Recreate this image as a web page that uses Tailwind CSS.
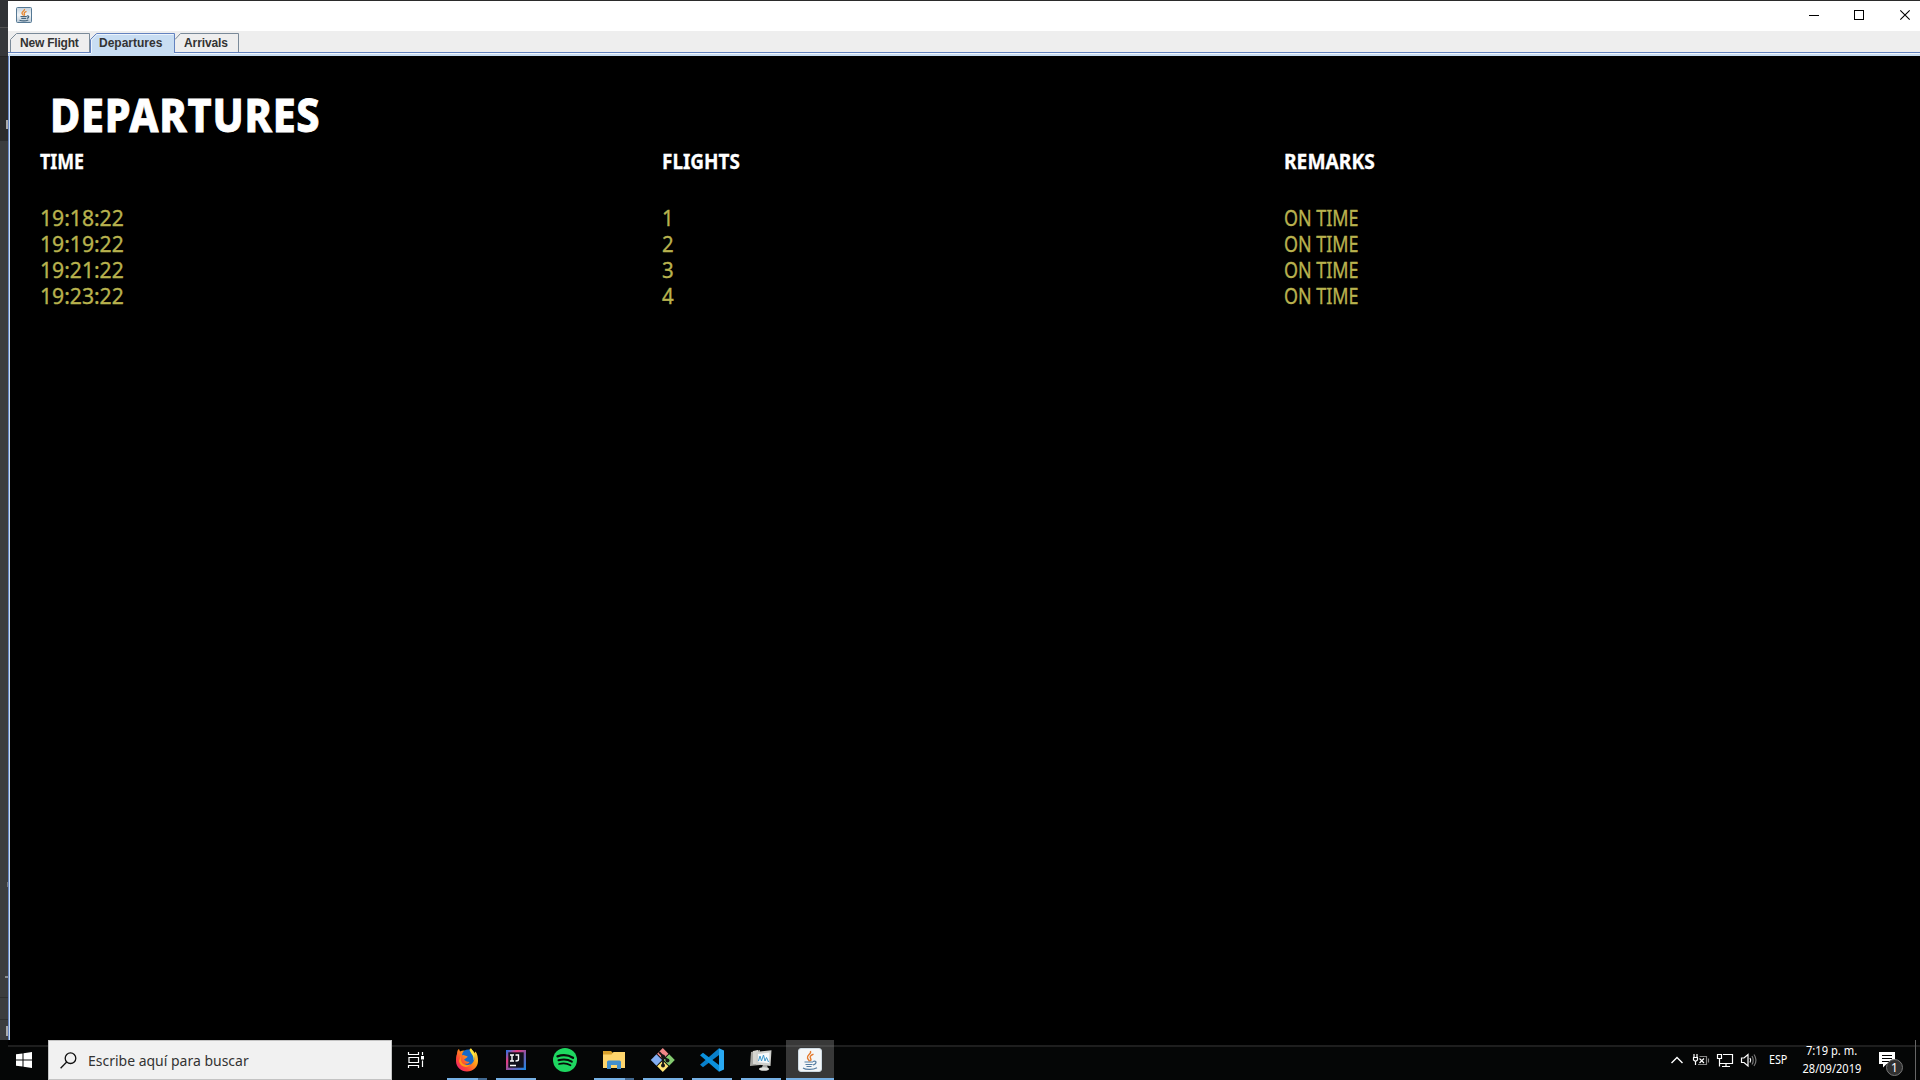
<!DOCTYPE html>
<html lang="es">
<head>
<meta charset="utf-8">
<title>Departures</title>
<script src="https://cdn.jsdelivr.net/npm/@tailwindcss/browser@4"></script>
</head>
<body class="w-[1920px] h-[1080px] overflow-hidden bg-black font-['Noto_Sans',sans-serif] flex flex-col">
<div class="flex h-[1040px] shrink-0">
  <!-- Editor window visible behind the left edge -->
  <div class="w-2 shrink-0 bg-[#3b3d3f] flex flex-col relative">
    <div class="h-[28px] bg-[#303235] border-b border-[#515151]"></div>
    <div class="h-[29px] bg-[#35373a] border-b border-[#242424]"></div>
    <div class="h-[84px] bg-[#2b2c2d]"></div>
    <div class="grow bg-[#3b3d3f]"></div>
    <div class="absolute left-[6px] top-[120px] w-[2px] h-[9px] bg-[#a9abad]"></div>
    <div class="absolute left-[7px] top-[882px] w-px h-[5px] bg-[#77797b]"></div>
    <div class="absolute left-[5px] top-[976px] w-[3px] h-[2px] bg-[#8b8d8f]"></div>
    <div class="absolute left-0 top-[997px] w-2 h-px bg-[#2d2f30]"></div>
    <div class="absolute left-0 top-[1019px] w-2 h-px bg-[#2d2f30]"></div>
    <div class="absolute left-[6px] top-[1026px] w-[2px] h-[10px] bg-[#a9abad]"></div>
  </div>
  <main class="flex flex-col grow border-t border-[#2b2b2b]">
    <header class="h-[30px] shrink-0 bg-white flex items-center justify-between pl-2">
      <svg class="size-4 -mt-0.5" viewBox="0 0 16 16" fill="none">
        <defs><linearGradient id="jb" x1="0" y1="0" x2="0" y2="1"><stop stop-color="#c3d2df"/><stop offset=".5" stop-color="#f2f5f7"/><stop offset="1" stop-color="#b7c7d4"/></linearGradient></defs>
        <rect x=".5" y=".5" width="15" height="15" rx="1" fill="url(#jb)" stroke="#557894"/>
        <path d="M8.500 2C9 4 5.500 4.500 6 6.300 6.200 7.300 7.500 7.700 7.300 8.700M10.500 4.300C8.800 5 7.600 6 8.400 7 8.800 7.600 8.600 8.200 8.200 8.600" stroke="#e8862e" stroke-width="1.300"/>
        <path d="M4.500 9.500H10.800M5.300 11.300H10.200M10.800 9C13.500 8.300 13.300 11 10.900 11.300M3.500 13.200C6 14 10 14 12.300 13" stroke="#46657e" stroke-width="1.200"/>
      </svg>
      <svg class="w-[112px] h-[30px]" viewBox="1808 1 112 30" fill="none" stroke="#000">
        <path d="M1809 15.500H1819M1854.500 10.500H1863.500V19.500H1854.500Z" shape-rendering="crispEdges"/>
        <path d="M1900.300 10.300L1909.700 19.700M1909.700 10.300L1900.300 19.700" stroke-width="1.100"/>
      </svg>
    </header>
    <nav class="h-[21px] shrink-0 bg-[#eeeeee] relative">
      <svg class="absolute left-0 top-0 w-[232px] h-[22px]" viewBox="8 31 232 22" fill="none" stroke="#7a8a99">
        <path d="M10.500 52V39.500L16.500 33.500H89.500V52" />
        <path d="M91 53V39.500L96.500 34H174V53Z" fill="#c8ddf2" stroke="none"/>
        <path d="M90.500 39.500L96.500 33.500H174.500V52M90.500 39.500V52" stroke="#6382bf"/>
        <path d="M91.500 53V40L97 34.500H173.500" stroke="#edf4fb"/>
        <path d="M175 39.500L180.500 33.500H238.500V52"/>
      </svg>
      <div class="relative flex h-full text-[12px] leading-[24px] font-bold text-[#333] font-['Liberation_Sans',sans-serif]">
        <span class="w-[79px] pl-3 whitespace-nowrap tracking-[-0.2px]">New Flight</span>
        <span class="w-[85px] pl-3">Departures</span>
        <span class="pl-3 tracking-[-0.1px]">Arrivals</span>
      </div>
    </nav>
    <div class="h-1 shrink-0 bg-[#c8ddf2] border-t border-[#6382bf] flex">
      <div class="w-[83px] h-px bg-[#f2f7fc]"></div>
      <div class="w-[83px] h-[4px] bg-[#c8ddf2] -mt-px"></div>
      <div class="grow h-px bg-[#f2f7fc]"></div>
    </div>
    <section class="grow bg-black border-l border-[#6382bf] flex">
      <div class="w-px bg-[#c8ddf2]"></div>
      <div class="grow pl-[30px] text-[21.500px] leading-[26px]">
        <h1 class="mt-[26px] ml-[10px] h-[66px] text-[46.500px] leading-[64px] font-extrabold tracking-[0.800px] text-white origin-left scale-x-[0.890] w-max [-webkit-text-stroke:0.8px_white]">DEPARTURES</h1>
        <div class="grid grid-cols-[622px_622px_1fr] font-bold text-white [-webkit-text-stroke:0.300px_white]">
          <span class="origin-left scale-x-[0.829]">TIME</span><span class="origin-left scale-x-[0.880]">FLIGHTS</span><span class="origin-left scale-x-[0.895]">REMARKS</span>
        </div>
        <div class="grid grid-cols-[622px_622px_1fr] mt-[31px] text-[#b8b24e] [-webkit-text-stroke:0.350px_#b8b24e]">
          <span class="origin-left scale-x-[0.982]">19:18:22</span><span class="origin-left scale-x-[0.950]">1</span><span class="origin-left scale-x-[0.834]">ON TIME</span>
          <span class="origin-left scale-x-[0.982]">19:19:22</span><span class="origin-left scale-x-[0.950]">2</span><span class="origin-left scale-x-[0.834]">ON TIME</span>
          <span class="origin-left scale-x-[0.982]">19:21:22</span><span class="origin-left scale-x-[0.950]">3</span><span class="origin-left scale-x-[0.834]">ON TIME</span>
          <span class="origin-left scale-x-[0.982]">19:23:22</span><span class="origin-left scale-x-[0.950]">4</span><span class="origin-left scale-x-[0.834]">ON TIME</span>
        </div>
      </div>
    </section>
  </main>
</div>
<footer class="h-10 shrink-0 bg-[#050606] flex relative text-white">
  <div class="absolute left-2 right-0 top-0 h-[7px] bg-black border-b-2 border-[#1e1e1e]"></div>
  <div class="relative w-12 flex items-center justify-center">
    <svg class="size-4" viewBox="0 0 16 16" fill="#fff"><path d="M0 2.300L6.500 1.400V7.500H0ZM7.500 1.250L16 0V7.500H7.500ZM0 8.500H6.500V14.600L0 13.700ZM7.500 8.500H16V16L7.500 14.750Z"/></svg>
  </div>
  <div class="relative w-[344px] bg-[#f1f1f1] border border-[#c3c3c3] flex items-center pl-[11px] text-[#333]">
    <svg class="size-[17px] mr-[11px]" viewBox="0 0 17 17" fill="none" stroke="#111" stroke-width="1.300"><circle cx="10.500" cy="6.200" r="5.300"/><path d="M6.700 10L.6 16.200"/></svg>
    <span class="text-[15px] origin-left scale-x-[0.932] whitespace-nowrap">Escribe aquí para buscar</span>
  </div>
  <svg class="relative w-[458px] h-10" viewBox="392 1040 458 40" fill="none">
    <defs>
      <linearGradient id="ff" x1="1" y1="0" x2="0" y2="1"><stop stop-color="#fff04a"/><stop offset=".4" stop-color="#ff9a18"/><stop offset=".7" stop-color="#ff4438"/><stop offset="1" stop-color="#e5148c"/></linearGradient>
      <linearGradient id="ij" x1="0" y1="0" x2="1" y2="1"><stop stop-color="#1679ef"/><stop offset=".3" stop-color="#e63e80"/><stop offset=".6" stop-color="#765bae"/><stop offset="1" stop-color="#148bea"/></linearGradient>
    </defs>
    <g stroke="#fff" stroke-width="1.200">
      <path d="M408.500 1052V1054.500H418.500V1052M408.500 1068V1065.500H418.500V1068M409 1057.500H418.500V1062.500H409Z"/>
      <path d="M422.500 1052V1055M422.500 1060.500V1067"/><path d="M421 1056H424V1059.500H421Z" fill="#fff" stroke="none"/>
    </g>
    <!-- Firefox -->
    <path d="M457 1054C457 1051 458 1049.500 459 1049L460 1051.500C462 1050.300 464 1050 466 1051L469 1052C469 1050 469.500 1049 471 1048.200C472 1051 474 1051 474.500 1053L475.500 1051.500C477.500 1054 478 1058 478 1061C478 1067 473 1071.500 467 1071.500S456 1067 456 1061C456 1058 456 1056 457 1054Z" fill="url(#ff)"/>
    <path d="M462.500 1053C463.500 1050.500 466 1049 469.500 1049.500C474 1052 476 1057 473.500 1061.500C471.500 1065.500 467 1066 464.500 1063.500C467 1064.200 468.800 1063.500 469.500 1062C467.500 1062 466 1061.500 464 1059.800L467.800 1056.800C465.800 1055 464 1056 462 1055Z" fill="#1769c9"/>
    <path d="M469.500 1050C471 1054 474 1055 473.500 1060.500C475.500 1057 475.500 1053 471 1048.500Z" fill="#ffe83b"/>
    <path d="M461 1055C459.500 1062 463.500 1067 470 1064.500C468 1069 460 1067 459 1061Z" fill="#ff9b15"/>
    <!-- IntelliJ IDEA -->
    <rect x="506" y="1050" width="20" height="20" fill="url(#ij)"/><rect x="508.300" y="1052.300" width="15.400" height="15.400" fill="#11111b"/>
    <path d="M510 1055H514M512 1055V1061M510 1061H514M515.500 1055H518.500V1059.500Q518.500 1061 515.500 1061M510 1065.500H516" stroke="#fff" stroke-width="1.400"/>
    <!-- Spotify -->
    <circle cx="565" cy="1060" r="12" fill="#1ed760"/>
    <g stroke="#080b09" stroke-linecap="round"><path d="M557.500 1056.300Q566 1053.500 573 1057.800" stroke-width="2.300"/><path d="M558.500 1060.300Q566 1058 571.800 1061.700" stroke-width="2"/><path d="M559 1064Q565.500 1062.200 570.500 1065.300" stroke-width="1.700"/></g>
    <!-- File Explorer -->
    <path d="M603 1051H611L613 1053H625V1068H603Z" fill="#d9a02b"/><path d="M603 1054.500H611.500L613.500 1052H625V1068H603Z" fill="#ffd56c"/>
    <path d="M607 1069V1062Q607 1060.500 608.500 1060.500H619.500Q621 1060.500 621 1062V1069H617V1065H611V1069Z" fill="#438fcd"/>
    <!-- Git -->
    <g transform="translate(662.800 1060) rotate(45)"><rect x="-8.500" y="-8.500" width="8" height="8" fill="#f18787"/><rect x=".5" y="-8.500" width="8" height="8" fill="#84ca70"/><rect x="-8.500" y=".5" width="8" height="8" fill="#83aef2"/><rect x=".5" y=".5" width="8" height="8" fill="#ffe477"/></g>
    <path d="M659 1052L663 1056V1067M663 1056L668 1060.500" stroke="#151515" stroke-width="1.800"/><circle cx="663" cy="1056.500" r="2" fill="#151515"/><circle cx="663" cy="1065.500" r="2" fill="#151515"/><circle cx="667.500" cy="1060.500" r="2" fill="#151515"/>
    <!-- Visual Studio Code -->
    <path d="M719 1048.300L724 1050.500V1069.500L719 1071.700Z" fill="#29a9f2"/>
    <path d="M719 1048.300V1055L703 1067.300L700 1064.800Z" fill="#087fca"/><path d="M719 1071.700V1065L703 1052.700L700 1055.200Z" fill="#0b91dc"/>
    <!-- System monitor -->
    <path d="M751 1052L760 1050V1065L750 1066Z" fill="#a5a5a0"/><path d="M753 1051L758 1050V1064H753Z" fill="#d5d5d0"/>
    <path d="M756 1052L771.500 1050.300L770.500 1066L756 1064.500Z" fill="#cfd0cc"/><path d="M758 1054L769.500 1052.500L769 1063.200L758.500 1062.200Z" fill="#f5f9fb"/>
    <path d="M758.500 1061L760 1056L761.500 1061L763.500 1055L765 1061L766.500 1057.500L768.500 1062" stroke="#3f98cb"/><path d="M763 1065H767L768 1069H761Z" fill="#a9aaa6"/><ellipse cx="764" cy="1069" rx="5" ry="1.800" fill="#dedfdb"/>
    <!-- Java, active -->
    <rect x="786" y="1040" width="48" height="40" fill="#383838"/><path d="M786 1046H834" stroke="#484848" stroke-width="2"/>
    <rect x="798.500" y="1048.500" width="23" height="23" rx="2.500" fill="#f3f6f8" stroke="#cdd9e2"/>
    <path d="M810.500 1051C812 1054 806.500 1055 807.500 1058C808 1059.800 809.500 1060 809.300 1061.500M813.500 1054.200C810.500 1055.500 809.300 1056.500 810.700 1058.500C811.300 1059.500 811 1060.300 810.300 1061" stroke="#e4792b" stroke-width="1.400"/>
    <path d="M804.500 1062H813M805.500 1064.500H812.500M806.500 1066.500H811.500M813 1061.500C817 1060 817 1064 813 1065M803 1068C806 1070 813 1070 817 1067.700" stroke="#557ca0" stroke-width="1.200"/>
    <path d="M447 1079H478M496 1079H536M594 1079H625M643 1079H683M692 1079H732M741 1079H781M786 1079H834" stroke="#76b0e4" stroke-width="2"/>
    <path d="M478 1079H487M625 1079H634" stroke="#426991" stroke-width="2"/>
  </svg>
  <svg class="relative ml-auto w-[104px] h-10" viewBox="1664 1040 104 40" fill="none" stroke="#fff" stroke-width="1.200">
    <path d="M1671.500 1063L1677 1057.500L1682.500 1063" stroke-width="1.400"/>
    <path d="M1694 1054V1057M1697 1054V1057M1693 1057.500H1698M1693.500 1057.500V1060L1695.500 1061.500L1697.500 1060V1057.500M1695.500 1061.500V1065"/><path d="M1699.500 1056.500H1706.500V1064.500H1698M1708.500 1058.500V1062.500" stroke="#888"/><path d="M1699.500 1058.500L1704 1063M1704 1058.500L1699.500 1063" />
    <path d="M1723 1054.500H1732.500V1063.500H1720M1726 1064V1066.500M1722 1066.500H1730M1717.500 1054.500H1721.500V1058.500H1717.500ZM1719.500 1059V1066.500"/>
    <path d="M1741.500 1058H1744L1748 1054.500V1066L1744 1062.500H1741.500Z"/><path d="M1750 1058Q1751.500 1060.300 1750 1062.500"/><path d="M1752 1056Q1754.500 1060.300 1752 1064.500M1754 1054.500Q1758 1060.300 1754 1066" stroke="#777"/>
  </svg>
  <span class="relative w-[28px] pl-px text-[12px] leading-10 origin-left scale-x-[0.900]">ESP</span>
  <div class="relative w-[72px] flex flex-col items-center text-[12px] leading-[17.500px] pt-[2px]">
    <span class="whitespace-nowrap scale-x-[0.930]">7:19 p. m.</span><span class="scale-x-[0.920]">28/09/2019</span>
  </div>
  <svg class="relative w-[52px] h-10" viewBox="1868 1040 52 40" fill="none">
    <path d="M1879 1052H1895V1064H1886.500L1883 1067.500V1064H1879Z" fill="#fff"/><path d="M1882 1055.500H1892M1882 1058.500H1892M1882 1061.500H1889" stroke="#000"/>
    <circle cx="1894.500" cy="1067.500" r="8" fill="#303030" stroke="#777"/>
    <text x="1894.500" y="1071.500" text-anchor="middle" font-size="12" fill="#fff" font-family="Noto Sans, sans-serif">1</text>
    <path d="M1915.500 1040V1080" stroke="#666"/>
  </svg>
</footer>
</body>
</html>
